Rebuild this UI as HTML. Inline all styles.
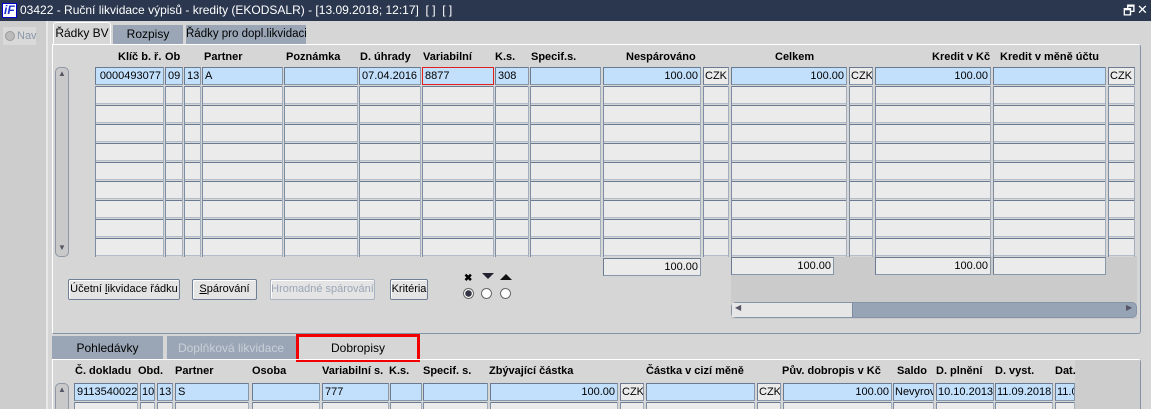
<!DOCTYPE html>
<html><head><meta charset="utf-8">
<style>
*{box-sizing:border-box;margin:0;padding:0}
html,body{width:1151px;height:409px;overflow:hidden}
body{background:#d6d6d6;font-family:"Liberation Sans",Arial,sans-serif;font-size:11px;color:#000;position:relative}
.a{position:absolute}
.t{position:absolute;font-weight:bold;font-size:11px;white-space:nowrap}
.c{position:absolute;height:18px;border:1px solid #8797aa;border-top-color:#6a7a90;border-left-color:#6a7a90;background:#ebebeb;font-size:11px;line-height:16px;padding:0 2px;white-space:nowrap;overflow:hidden}
.b{background:#c2dffb}
.r{text-align:right}
.col{position:absolute;background:repeating-linear-gradient(to bottom,#6a7a90 0 1px,#ebebeb 1px 17px,#b3bdca 17px 18px,#d6d6d6 18px 19px);border-left:1px solid #7d8da2;border-right:1px solid #a4afbd}
.btn{position:absolute;height:21px;border:1px solid #6f7f95;border-radius:2px;background:#e4e4e4;font-size:11px;line-height:19px;text-align:center;box-shadow:inset 1px 1px 0 #fff;white-space:nowrap}
.tab{position:absolute;font-size:12px;text-align:center;white-space:nowrap}
.rad{position:absolute;width:11px;height:11px;border-radius:50%;border:1px solid #666;background:#fff}
</style></head><body>
<div class="a" style="left:0;top:0;width:1151px;height:21px;background:#2a374f"></div>
<div class="a" style="left:2px;top:3px;width:15px;height:15px;background:#fff;border:1px solid #00c"></div>
<div class="a" style="left:4px;top:3px;color:#1a2fd0;font-weight:bold;font-style:italic;font-size:12px">iF</div>
<div class="a" style="left:20px;top:3px;color:#fff;font-size:12px;white-space:nowrap">03422 - Ruční likvidace výpisů - kredity (EKODSALR) - [13.09.2018; 12:17]&nbsp; [ ]&nbsp; [ ]</div>
<div class="a" style="left:1123px;top:2px;color:#fff;font-size:13px">🗗</div>
<div class="a" style="left:1137px;top:2px;color:#fff;font-size:13px">✕</div>
<div class="a" style="left:0;top:21px;width:48px;height:388px;background:#cdcdcd;border-right:2px solid #e8e8e8"></div>
<div class="a" style="left:3px;top:27px;width:33px;height:18px;background:#d9d9d9"></div>
<div class="rad" style="left:5px;top:31px;width:10px;height:10px;background:#bbb;border-color:#999"></div>
<div class="a" style="left:17px;top:30px;color:#8a96a6;font-size:11px">Nav</div>
<div class="tab" style="left:53px;top:22px;width:58px;height:23px;background:#d6d6d6;border:1px solid #fff;border-bottom:none;border-radius:3px 3px 0 0;line-height:21px">Řádky BV</div>
<div class="tab" style="left:113px;top:25px;width:70px;height:19px;background:#9aa6b6;line-height:19px">Rozpisy</div>
<div class="tab" style="left:186px;top:25px;width:120px;height:19px;background:#9aa6b6;line-height:19px;font-size:11.5px">Řádky pro dopl.likvidaci</div>
<div class="a" style="left:52px;top:44px;width:1089px;height:290px;border:1px solid #fff;border-right-color:#8593a6;border-bottom-color:#8593a6;border-radius:0 3px 3px 0"></div>
<div class="a" style="left:731px;top:256px;width:406px;height:63px;background:#cbcbcb"></div>
<div class="t" style="left:118px;top:51px">Klíč b. ř.</div>
<div class="t" style="left:165px;top:51px">Ob</div>
<div class="t" style="left:204px;top:51px">Partner</div>
<div class="t" style="left:286px;top:51px">Poznámka</div>
<div class="t" style="left:360px;top:51px">D. úhrady</div>
<div class="t" style="left:423px;top:51px">Variabilní</div>
<div class="t" style="left:495px;top:51px">K.s.</div>
<div class="t" style="left:531px;top:51px">Specif.s.</div>
<div class="t" style="left:626px;top:51px">Nespárováno</div>
<div class="t" style="left:775px;top:51px">Celkem</div>
<div class="t" style="left:932px;top:51px">Kredit v Kč</div>
<div class="t" style="left:1000px;top:51px">Kredit v měně účtu</div>
<div class="a" style="left:55px;top:67px;width:14px;height:190px;background:#c9c9c9;border:1px solid #8c98a8;border-radius:5px"></div>
<div class="a" style="left:58px;top:69px;font-size:8px;color:#556">▲</div>
<div class="a" style="left:58px;top:243px;font-size:8px;color:#556">▼</div>
<div class="c b r" style="left:95px;top:67px;width:69px">0000493077</div>
<div class="c b" style="left:165px;top:67px;width:18px">09</div>
<div class="c b" style="left:184px;top:67px;width:17px">13</div>
<div class="c b" style="left:202px;top:67px;width:81px">A</div>
<div class="c b" style="left:284px;top:67px;width:74px"></div>
<div class="c b" style="left:359px;top:67px;width:62px">07.04.2016</div>
<div class="c b" style="left:422px;top:67px;width:72px;border:1px solid #e02020">8877</div>
<div class="c b" style="left:495px;top:67px;width:34px">308</div>
<div class="c b" style="left:530px;top:67px;width:71px"></div>
<div class="c b r" style="left:603px;top:67px;width:98px">100.00</div>
<div class="c" style="left:703px;top:67px;width:26px;padding:0 1px">CZK</div>
<div class="c b r" style="left:731px;top:67px;width:116px">100.00</div>
<div class="c" style="left:849px;top:67px;width:24px;padding:0 1px">CZK</div>
<div class="c b r" style="left:875px;top:67px;width:116px">100.00</div>
<div class="c b" style="left:993px;top:67px;width:113px"></div>
<div class="c" style="left:1108px;top:67px;width:27px;padding:0 1px">CZK</div>
<div class="col" style="left:95px;top:86px;width:69px;height:171px"></div>
<div class="col" style="left:165px;top:86px;width:18px;height:171px"></div>
<div class="col" style="left:184px;top:86px;width:17px;height:171px"></div>
<div class="col" style="left:202px;top:86px;width:81px;height:171px"></div>
<div class="col" style="left:284px;top:86px;width:74px;height:171px"></div>
<div class="col" style="left:359px;top:86px;width:62px;height:171px"></div>
<div class="col" style="left:422px;top:86px;width:72px;height:171px"></div>
<div class="col" style="left:495px;top:86px;width:34px;height:171px"></div>
<div class="col" style="left:530px;top:86px;width:71px;height:171px"></div>
<div class="col" style="left:603px;top:86px;width:98px;height:171px"></div>
<div class="col" style="left:703px;top:86px;width:26px;height:171px"></div>
<div class="col" style="left:731px;top:86px;width:116px;height:171px"></div>
<div class="col" style="left:849px;top:86px;width:24px;height:171px"></div>
<div class="col" style="left:875px;top:86px;width:116px;height:171px"></div>
<div class="col" style="left:993px;top:86px;width:113px;height:171px"></div>
<div class="col" style="left:1108px;top:86px;width:27px;height:171px"></div>
<div class="c r" style="left:603px;top:258px;width:98px">100.00</div>
<div class="c r" style="left:731px;top:257px;width:103px">100.00</div>
<div class="c r" style="left:875px;top:257px;width:116px">100.00</div>
<div class="c" style="left:993px;top:257px;width:113px"></div>
<div class="a" style="left:731px;top:302px;width:406px;height:16px;background:#96a4b6;border:1px solid #8593a6;border-radius:5px"></div>
<div class="a" style="left:732px;top:303px;width:121px;height:14px;background:#e6e6e6;border-right:1px solid #7d8da2"></div>
<div class="a" style="left:735px;top:303px;font-size:8px;color:#556">◀</div>
<div class="a" style="left:1126px;top:303px;font-size:8px;color:#556">▶</div>
<div class="btn" style="left:68px;top:279px;width:112px">Účetní <u>l</u>ikvidace řádku</div>
<div class="btn" style="left:192px;top:279px;width:65px"><u>S</u>párování</div>
<div class="btn" style="left:270px;top:279px;width:105px;color:#9aa6b6;border-color:#a9b4c2">Hromadné spárování</div>
<div class="btn" style="left:390px;top:279px;width:38px">Kritéria</div>
<div class="a" style="left:464px;top:273px;font-size:10px;font-weight:bold">✖</div>
<div class="a" style="left:482px;top:273px;width:0;height:0;border-left:6px solid transparent;border-right:6px solid transparent;border-top:6px solid #223"></div>
<div class="a" style="left:500px;top:274px;width:0;height:0;border-left:6px solid transparent;border-right:6px solid transparent;border-bottom:6px solid #111"></div>
<div class="rad" style="left:463px;top:288px;background:radial-gradient(#334 0 3px,#fff 3.5px)"></div>
<div class="rad" style="left:481px;top:288px"></div>
<div class="rad" style="left:500px;top:288px"></div>
<div class="a" style="left:50px;top:336px;width:1101px;height:24px;background:#9aa6b6"></div>
<div class="a" style="left:50px;top:336px;width:2px;height:24px;background:#d6d6d6"></div>
<div class="a" style="left:163px;top:336px;width:4px;height:24px;background:#d6d6d6"></div>
<div class="a" style="left:418px;top:334px;width:733px;height:27px;background:#d6d6d6"></div>
<div class="tab" style="left:52px;top:341px;width:111px">Pohledávky</div>
<div class="tab" style="left:167px;top:341px;width:128px;color:#c8cfd8">Doplňková likvidace</div>
<div class="a" style="left:296px;top:334px;width:124px;height:28px;background:#d6d6d6;border:3px solid #f20000"></div>
<div class="tab" style="left:296px;top:341px;width:124px">Dobropisy</div>
<div class="a" style="left:52px;top:359px;width:1089px;height:60px;border:1px solid #fff;border-right-color:#8593a6;border-radius:0 3px 0 0"></div>
<div class="a" style="left:1075px;top:360px;width:65px;height:50px;background:#cdcdcd"></div>
<div class="t" style="left:75px;top:365px">Č. dokladu</div>
<div class="t" style="left:138px;top:365px">Obd.</div>
<div class="t" style="left:175px;top:365px">Partner</div>
<div class="t" style="left:252px;top:365px">Osoba</div>
<div class="t" style="left:322px;top:365px">Variabilní s.</div>
<div class="t" style="left:389px;top:365px">K.s.</div>
<div class="t" style="left:423px;top:365px">Specif. s.</div>
<div class="t" style="left:489px;top:365px">Zbývající částka</div>
<div class="t" style="left:646px;top:365px">Částka v cizí měně</div>
<div class="t" style="left:782px;top:365px">Pův. dobropis v Kč</div>
<div class="t" style="left:897px;top:365px">Saldo</div>
<div class="t" style="left:936px;top:365px">D. plnění</div>
<div class="t" style="left:995px;top:365px">D. vyst.</div>
<div class="t" style="left:1055px;top:365px">Dat.</div>
<div class="a" style="left:55px;top:383px;width:14px;height:30px;background:#c9c9c9;border:1px solid #8c98a8;border-radius:5px"></div>
<div class="a" style="left:58px;top:385px;font-size:8px;color:#556">▲</div>
<div class="c b" style="left:74px;top:383px;width:64px">9113540022</div>
<div class="c b" style="left:140px;top:383px;width:15px;padding:0 1px">10</div>
<div class="c b" style="left:157px;top:383px;width:16px;padding:0 1px">13</div>
<div class="c b" style="left:175px;top:383px;width:74px">S</div>
<div class="c b" style="left:252px;top:383px;width:68px"></div>
<div class="c b" style="left:322px;top:383px;width:67px">777</div>
<div class="c b" style="left:390px;top:383px;width:32px"></div>
<div class="c b" style="left:423px;top:383px;width:65px"></div>
<div class="c b r" style="left:490px;top:383px;width:128px">100.00</div>
<div class="c" style="left:620px;top:383px;width:24px;padding:0 1px">CZK</div>
<div class="c b" style="left:646px;top:383px;width:109px"></div>
<div class="c" style="left:757px;top:383px;width:24px;padding:0 1px">CZK</div>
<div class="c b r" style="left:783px;top:383px;width:109px">100.00</div>
<div class="c b" style="left:893px;top:383px;width:41px;padding:0 1px">Nevyrov</div>
<div class="c b" style="left:936px;top:383px;width:58px;padding:0 1px">10.10.2013</div>
<div class="c b" style="left:995px;top:383px;width:58px;padding:0 1px">11.09.2018</div>
<div class="c b" style="left:1055px;top:383px;width:20px;padding:0 1px">11.0</div>
<div class="col" style="left:74px;top:402px;width:64px;height:19px"></div>
<div class="col" style="left:140px;top:402px;width:15px;height:19px"></div>
<div class="col" style="left:157px;top:402px;width:16px;height:19px"></div>
<div class="col" style="left:175px;top:402px;width:74px;height:19px"></div>
<div class="col" style="left:252px;top:402px;width:68px;height:19px"></div>
<div class="col" style="left:322px;top:402px;width:67px;height:19px"></div>
<div class="col" style="left:390px;top:402px;width:32px;height:19px"></div>
<div class="col" style="left:423px;top:402px;width:65px;height:19px"></div>
<div class="col" style="left:490px;top:402px;width:128px;height:19px"></div>
<div class="col" style="left:620px;top:402px;width:24px;height:19px"></div>
<div class="col" style="left:646px;top:402px;width:109px;height:19px"></div>
<div class="col" style="left:757px;top:402px;width:24px;height:19px"></div>
<div class="col" style="left:783px;top:402px;width:109px;height:19px"></div>
<div class="col" style="left:893px;top:402px;width:41px;height:19px"></div>
<div class="col" style="left:936px;top:402px;width:58px;height:19px"></div>
<div class="col" style="left:995px;top:402px;width:58px;height:19px"></div>
<div class="col" style="left:1055px;top:402px;width:20px;height:19px"></div>
</body></html>
